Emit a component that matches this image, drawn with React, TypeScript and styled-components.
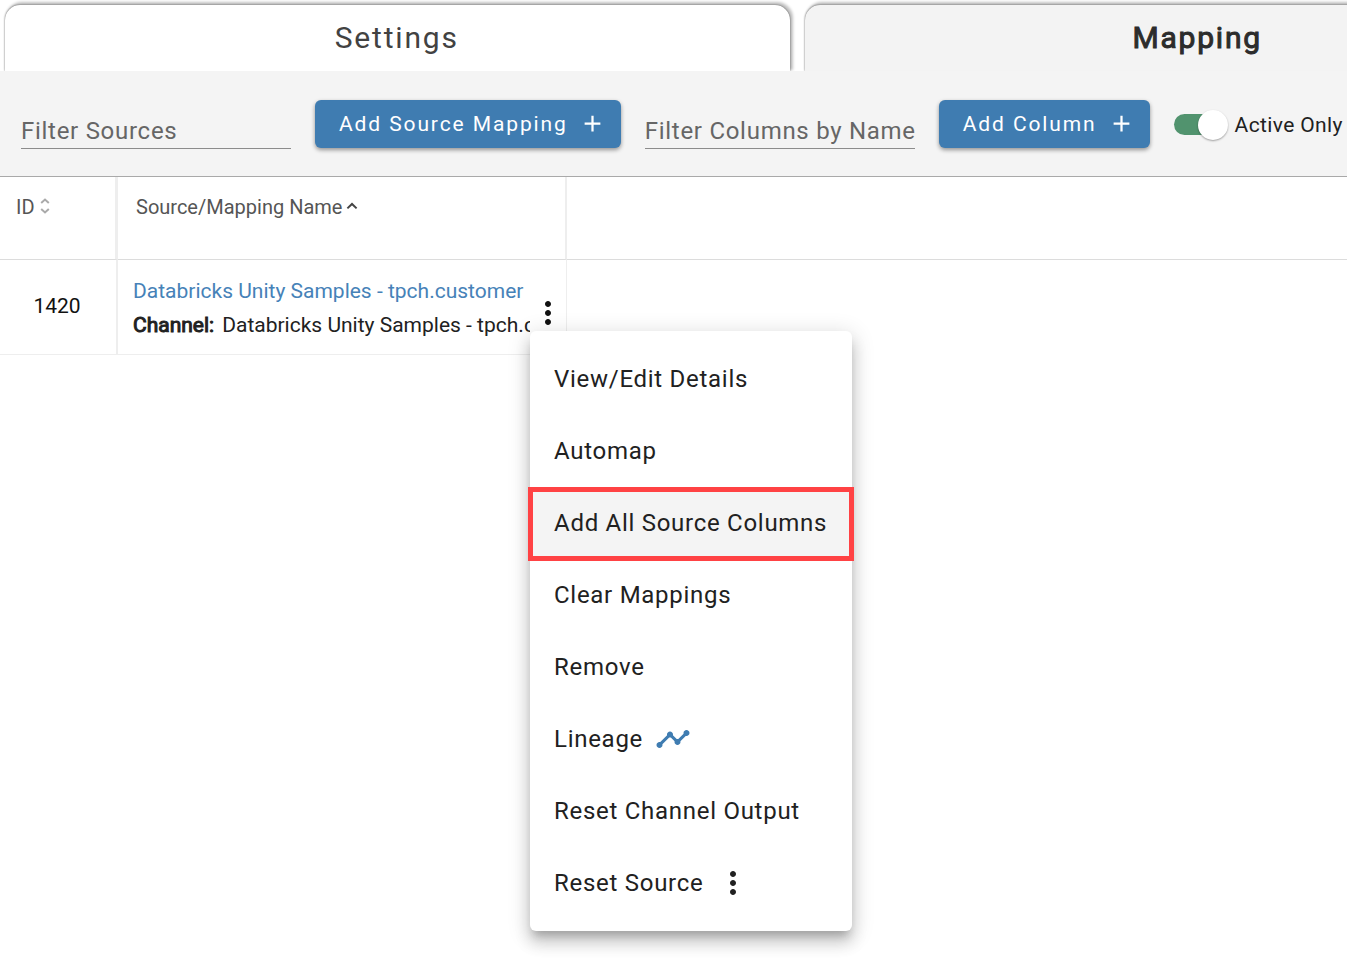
import React from 'react';
import styled, { createGlobalStyle } from 'styled-components';
import { MdAdd, MdMoreVert, MdTimeline } from 'react-icons/md';

const GlobalStyle = createGlobalStyle`
  *, *::before, *::after { box-sizing: border-box; }
  body {
    margin: 0;
    background: #fff;
    color: #212121;
    font-family: Roboto, "Liberation Sans", sans-serif;
    overflow-x: hidden;
  }
  button, input { font-family: inherit; }
`;

const Page = styled.main`
  min-height: 100vh;
`;

const Tabs = styled.nav`
  display: flex;
  gap: 15px;
  padding: 5px 5px 0;
  overflow: hidden;
`;

const Tab = styled.button<{ $active?: boolean }>`
  flex: 0 0 calc(58% + 10px);
  height: 66px;
  padding: 0 2px 2px 0;
  border: 0;
  border-radius: 15px 15px 0 0;
  background: ${(p) => (p.$active ? '#f3f3f3' : '#fff')};
  box-shadow: 2px -2px 3px 1px rgba(0, 0, 0, 0.24), 0 0 2px rgba(0, 0, 0, 0.6);
  color: ${(p) => (p.$active ? '#2c2c2c' : '#424242')};
  font-size: 30px;
  font-weight: 400;
  letter-spacing: 0.06em;
  -webkit-text-stroke: ${(p) => (p.$active ? 1 : 0)}px currentColor;
`;

const Toolbar = styled.section`
  position: relative;
  display: flex;
  align-items: center;
  gap: 24px;
  height: 106px;
  padding: 0 0 0 21px;
  border-bottom: 1px solid #a9a9a9;
  background: #f4f4f4;
`;

const FilterInput = styled.input`
  flex: 0 0 270px;
  width: 270px;
  height: 50px;
  padding: 16px 0 0;
  border: 0;
  border-bottom: 1px solid #8c8c8c;
  background: transparent;
  color: #212121;
  font-size: 24px;
  letter-spacing: 0.03em;
  outline: 0;
  &::placeholder { color: #666; opacity: 1; }
`;

const PrimaryButton = styled.button`
  display: flex;
  flex: none;
  align-items: center;
  gap: 11px;
  height: 48px;
  padding: 0 15px 0 24px;
  border: 0;
  border-radius: 6px;
  background: #3f7cb1;
  box-shadow: 0 2px 4px rgba(0, 0, 0, 0.4);
  color: #fff;
  font-size: 21px;
  letter-spacing: 0.09em;
  white-space: nowrap;
`;

const ToggleLabel = styled.label`
  display: flex;
  flex: none;
  align-items: center;
  gap: 7px;
  padding-top: 2px;
  font-size: 21px;
  letter-spacing: 0.018em;
  white-space: nowrap;
`;

const Switch = styled.input`
  display: flex;
  align-items: center;
  justify-content: flex-end;
  width: 54px;
  height: 21px;
  margin: 0;
  border-radius: 11px;
  appearance: none;
  background: linear-gradient(to right, #51936e 44px, transparent 44px);
  &::before {
    content: '';
    width: 30px;
    height: 30px;
    border-radius: 50%;
    background: #fff;
    box-shadow: 0 1px 2px rgba(0, 0, 0, 0.35);
  }
`;

const Grid = styled.table`
  width: 100%;
  border-collapse: separate;
  border-spacing: 0;
  table-layout: fixed;
`;

const IdCol = styled.col`
  width: 118px;
`;

const NameCol = styled.col`
  width: 449px;
`;

const HeadCell = styled.th<{ $rule?: number; $inset?: number }>`
  height: 83px;
  padding: 18px 0 0 ${(p) => p.$inset ?? 0}px;
  border-right: ${(p) => p.$rule ?? 0}px solid #eee;
  border-bottom: 1px solid #dcdcdc;
  color: #555;
  font-size: 20px;
  font-weight: 400;
  line-height: 24px;
  text-align: left;
  vertical-align: top;
`;

const SortButton = styled.button`
  display: flex;
  align-items: center;
  gap: 4px;
  padding: 0;
  border: 0;
  background: none;
  color: inherit;
  font-size: 20px;
  line-height: 24px;
`;

const SortIcon = styled.svg`
  width: 12px;
  height: 16px;
  margin-bottom: 2px;
  fill: none;
  stroke-width: 2;
`;

const BodyCell = styled.td<{ $rule?: number }>`
  height: 95px;
  padding: 0;
  border-right: ${(p) => p.$rule ?? 0}px solid #eee;
  border-bottom: 1px solid #eee;
`;

const IdCell = styled(BodyCell)`
  padding: 0 2px 2px 0;
  color: #111;
  font-size: 21px;
  text-align: center;
`;

const Source = styled.div`
  display: flex;
  align-items: center;
  padding-left: 15px;
`;

const SourceText = styled.div`
  flex: 1;
  min-width: 0;
  padding-top: 2px;
  overflow: hidden;
  font-size: 21px;
  line-height: 34px;
  white-space: nowrap;
`;

const SourceLink = styled.a`
  display: block;
  color: #4682b8;
  text-decoration: none;
`;

const ChannelLabel = styled.strong`
  margin-right: 8px;
  font-weight: 400;
  -webkit-text-stroke: 1px currentColor;
`;

const Actions = styled.div`
  position: relative;
  flex: none;
  width: 36px;
  margin-top: 12px;
`;

const IconButton = styled.button`
  display: flex;
  align-items: center;
  justify-content: center;
  width: 36px;
  height: 36px;
  padding: 0;
  border: 0;
  background: none;
  color: #111;
`;

const Menu = styled.div`
  position: absolute;
  z-index: 1;
  top: 100%;
  left: 0;
  width: 322px;
  padding: 12px 0;
  border-radius: 6px;
  background: #fff;
  box-shadow: 0 8px 8px -4px rgba(0, 0, 0, 0.2), 0 12px 15px 1px rgba(0, 0, 0, 0.14),
    0 4px 21px 3px rgba(0, 0, 0, 0.12);
`;

const MenuItem = styled.button<{ $marked?: boolean; $gap?: number }>`
  position: relative;
  display: flex;
  align-items: center;
  gap: ${(p) => p.$gap ?? 0}px;
  width: 100%;
  height: 72px;
  padding: 0 24px;
  border: 0;
  background: ${(p) => (p.$marked ? '#f4f4f4' : 'none')};
  color: #212121;
  font-size: 24px;
  letter-spacing: 0.03em;
  white-space: nowrap;
  &::after {
    content: '';
    display: ${(p) => (p.$marked ? 'block' : 'none')};
    position: absolute;
    inset: 0 -2px -2px;
    border: 5px solid #ff4244;
  }
`;

export default function App() {
  return (
    <Page>
      <GlobalStyle />
      <Tabs aria-label="Sections">
        <Tab type="button">Settings</Tab>
        <Tab type="button" $active>Mapping</Tab>
      </Tabs>
      <Toolbar>
        <FilterInput aria-label="Filter Sources" placeholder="Filter Sources" />
        <PrimaryButton type="button">Add Source Mapping <MdAdd size={27} /></PrimaryButton>
        <FilterInput aria-label="Filter Columns by Name" placeholder="Filter Columns by Name" />
        <PrimaryButton type="button">Add Column <MdAdd size={27} /></PrimaryButton>
        <ToggleLabel>
          <Switch type="checkbox" role="switch" defaultChecked />
          Active Only
        </ToggleLabel>
      </Toolbar>
      <Grid>
        <colgroup>
          <IdCol />
          <NameCol />
          <col />
        </colgroup>
        <thead>
          <tr>
            <HeadCell $rule={3} $inset={16} scope="col">
              <SortButton type="button">
                ID
                <SortIcon viewBox="0 0 12 16" stroke="#aaa" aria-hidden="true">
                  <path d="M2.2 5 6 1.6 9.8 5M2.2 11 6 14.4 9.8 11" />
                </SortIcon>
              </SortButton>
            </HeadCell>
            <HeadCell $rule={2} $inset={18} scope="col">
              <SortButton type="button">
                Source/Mapping Name
                <SortIcon viewBox="0 0 12 16" stroke="#444" aria-hidden="true">
                  <path d="M1.4 10.4 6 6l4.6 4.4" />
                </SortIcon>
              </SortButton>
            </HeadCell>
            <HeadCell as="td" />
          </tr>
        </thead>
        <tbody>
          <tr>
            <IdCell $rule={2}>1420</IdCell>
            <BodyCell $rule={1}>
              <Source>
                <SourceText>
                  <SourceLink href="#source">Databricks Unity Samples - tpch.customer</SourceLink>
                  <ChannelLabel>Channel:</ChannelLabel>Databricks Unity Samples - tpch.customer
                </SourceText>
                <Actions>
                  <IconButton type="button" aria-label="Source actions" aria-expanded="true">
                    <MdMoreVert size={36} />
                  </IconButton>
                  <Menu role="menu">
                    <MenuItem role="menuitem">View/Edit Details</MenuItem>
                    <MenuItem role="menuitem">Automap</MenuItem>
                    <MenuItem role="menuitem" $marked>Add All Source Columns</MenuItem>
                    <MenuItem role="menuitem">Clear Mappings</MenuItem>
                    <MenuItem role="menuitem">Remove</MenuItem>
                    <MenuItem role="menuitem" $gap={12}>Lineage <MdTimeline size={36} color="#3f7cb1" /></MenuItem>
                    <MenuItem role="menuitem">Reset Channel Output</MenuItem>
                    <MenuItem role="menuitem" $gap={12}>Reset Source <MdMoreVert size={36} /></MenuItem>
                  </Menu>
                </Actions>
              </Source>
            </BodyCell>
            <td />
          </tr>
        </tbody>
      </Grid>
    </Page>
  );
}
